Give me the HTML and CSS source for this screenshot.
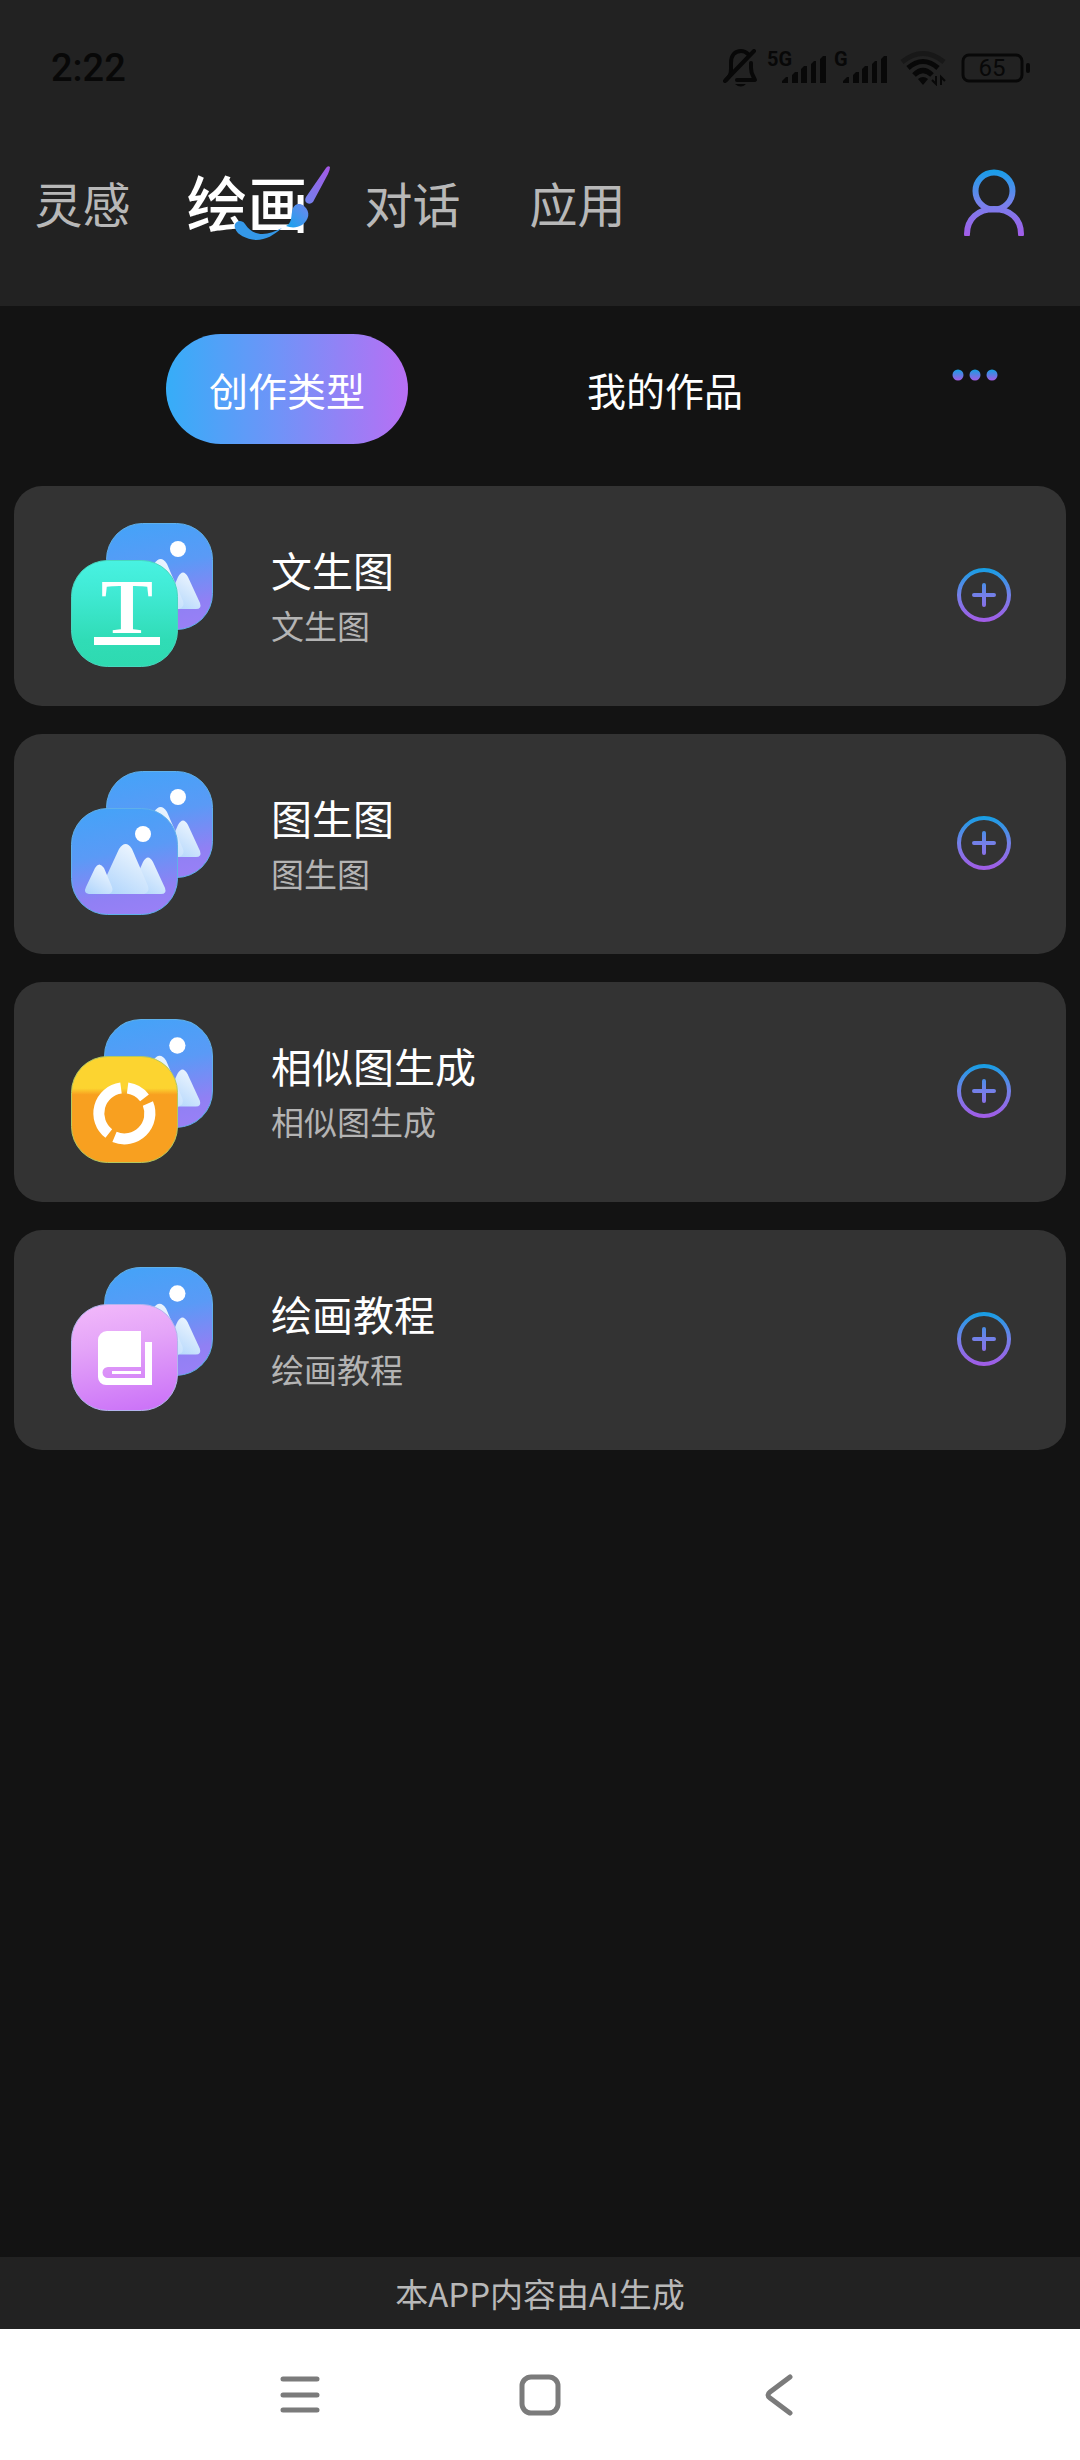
FILE: index.html
```
<!DOCTYPE html>
<html lang="zh-CN">
  <head>
    <meta charset="utf-8">
    <meta name="viewport" content="width=device-width, initial-scale=1">
    <title>绘画</title>
    <link rel="stylesheet" href="styles.css">
  </head>
  <body>
    <!-- shared gradients and symbols -->
    <svg class="defs" width="0" height="0" aria-hidden="true">
      <defs>
        <linearGradient id="line" gradientUnits="userSpaceOnUse" x1="0" y1="0" x2="0" y2="54">
          <stop offset="0" stop-color="#149fe4"/>
          <stop offset="0.5" stop-color="#7480e8"/>
          <stop offset="1" stop-color="#a35be6"/>
        </linearGradient>
        <linearGradient id="user" gradientUnits="userSpaceOnUse" x1="0" y1="0" x2="0" y2="67">
          <stop offset="0" stop-color="#149fe8"/>
          <stop offset="0.5" stop-color="#7582ec"/>
          <stop offset="1" stop-color="#a35ce8"/>
        </linearGradient>
        <linearGradient id="dots" x1="0" y1="0" x2="0" y2="1">
          <stop offset="0" stop-color="#169fe2"/>
          <stop offset="1" stop-color="#a25ce4"/>
        </linearGradient>
        <linearGradient id="handle" x1="1" y1="0" x2="0" y2="1">
          <stop offset="0" stop-color="#a656e6"/>
          <stop offset="1" stop-color="#7184ee"/>
        </linearGradient>
        <linearGradient id="drop" x1="0" y1="1" x2="1" y2="0">
          <stop offset="0" stop-color="#14a4ee"/>
          <stop offset="1" stop-color="#7186ec"/>
        </linearGradient>
        <linearGradient id="blue" x1="0.4" y1="0" x2="0.6" y2="1">
          <stop offset="0" stop-color="#46a2f8"/>
          <stop offset="0.4" stop-color="#5a9af6"/>
          <stop offset="0.8" stop-color="#9080f4"/>
          <stop offset="1" stop-color="#9880f6"/>
        </linearGradient>
        <linearGradient id="green" x1="0" y1="0" x2="0" y2="1">
          <stop offset="0" stop-color="#48f2e2"/>
          <stop offset="0.3" stop-color="#40ead4"/>
          <stop offset="0.75" stop-color="#30dcb6"/>
          <stop offset="1" stop-color="#2edab0"/>
        </linearGradient>
        <linearGradient id="orange" x1="0" y1="0" x2="0" y2="1">
          <stop offset="0.3" stop-color="#fcd430"/>
          <stop offset="0.36" stop-color="#f8a020"/>
        </linearGradient>
        <linearGradient id="pink" x1="0.4" y1="0" x2="0.6" y2="1">
          <stop offset="0" stop-color="#f0b6fa"/>
          <stop offset="0.35" stop-color="#e4a4f8"/>
          <stop offset="1" stop-color="#cc74f8"/>
        </linearGradient>
        <linearGradient id="snow" x1="0.8" y1="0" x2="0.2" y2="1">
          <stop offset="0" stop-color="#f2f8fe"/>
          <stop offset="1" stop-color="#b2d6fc"/>
        </linearGradient>

        <symbol id="photo" viewBox="0 0 107 107">
          <rect x="0.5" y="0.5" width="106" height="106" rx="36" fill="url(#blue)" stroke="#5fb0ea"/>
          <circle cx="72" cy="26" r="8" fill="#fff"/>
          <path d="M64 86 L64 72 L72 54 Q77 45 82 54 L94 80 Q96 86 90 86z" fill="url(#snow)"/>
          <path d="M32 86 L36 67 L48 41 Q54.700 31 61 41 L77 78 Q79 84 73 86z" fill="url(#snow)"/>
          <path d="M18 86 Q12 85 15 79 L24 60 Q28 53 33 60 L41 79 Q43 84 38 86z" fill="url(#snow)"/>
        </symbol>
        <symbol id="plus" viewBox="0 0 54 54">
          <g fill="none" stroke="url(#line)" stroke-width="4" stroke-linecap="round">
            <circle cx="27" cy="27" r="25"/>
            <path d="M17 27 H37 M27 17 V37"/>
          </g>
        </symbol>
        <symbol id="bars" viewBox="0 0 44 27">
          <path d="M0 27 V25 L4 21 H6 V27z M10 27 V19 L13 16 H16 V27z M19 27 V13 L22 10 H25 V27z M29 27 V8 L32 5 H34 V27z M38 27 V3 L41 0 H44 V27z"/>
        </symbol>
      </defs>
    </svg>

    <header class="header">
      <div class="status">
        <span class="time">2:22</span>
        <div class="status-icons">
          <svg width="36" height="38" viewBox="0 0 36 38" fill="none" stroke="#080808" stroke-width="4" stroke-linecap="round" stroke-linejoin="round">
            <path d="M3 31 C7 27 8 25 8 20 V14 C8 6 12 2 18 2 C21 2 23 3 25 5 M28 14 V19 C28 25 30 26 32 31 H14"/>
            <path d="M2 32 L31 2"/>
            <path d="M12 35 H23 Q18 40 12 35z" fill="#080808" stroke="none"/>
          </svg>
          <svg class="signal" width="60" height="44" viewBox="0 -4 60 44">
            <text x="1" y="16">5G</text>
            <use href="#bars" x="16" y="6" width="44" height="27"/>
          </svg>
          <svg class="signal" width="54" height="44" viewBox="0 -4 54 44">
            <text x="1" y="16">G</text>
            <use href="#bars" x="10" y="6" width="44" height="27"/>
          </svg>
          <svg class="wifi" width="46" height="36" viewBox="0 0 46 36" fill="none" stroke="#080808" stroke-width="5">
            <path d="M2 12 Q23 -5 44 12" stroke="#181818"/>
            <path d="M8 18 Q23 5 38 18"/>
            <path d="M14 25 Q23 16 32 25"/>
            <path d="M18 29 Q23 25 28 29 L23 35z" fill="#080808" stroke="none"/>
            <path d="M36 26 V34 L32 30 M41 35 V27 L45 31" stroke-width="2"/>
          </svg>
          <svg class="battery" width="70" height="30" viewBox="0 0 70 30">
            <rect x="2" y="2" width="59" height="26" rx="6" fill="none" stroke="#080808" stroke-width="3"/>
            <rect x="65" y="10" width="4" height="10" rx="2"/>
            <text x="31" y="23" text-anchor="middle">65</text>
          </svg>
        </div>
      </div>

      <div class="topbar">
        <nav class="tabs">
          <a class="tab" href="#">灵感</a>
          <a class="tab active" href="#" aria-current="page">绘画
            <svg class="brush" width="96" height="74" viewBox="0 0 96 74" aria-hidden="true">
              <path d="M1 62 C-1 56 7 52 11 58 C20 72 35 69 48 62 C40 69 32 74 22 74 C12 73 3 69 1 62z" fill="#3498e8"/>
              <path d="M52 60 C58 57 57 51 58 46 C59 38 65 36 70 40 C77 46 75 54 68 59 C63 62 57 62 52 60z" fill="url(#drop)"/>
              <path d="M72 31 L92 2 Q94 -1 96 1 Q96 4 94 8 L79 36 Q76 39 73 37 Q70 35 72 31z" fill="url(#handle)"/>
            </svg>
          </a>
          <a class="tab" href="#">对话</a>
          <a class="tab" href="#">应用</a>
        </nav>
        <button class="icon-btn" type="button" aria-label="个人中心">
          <svg width="60" height="67" viewBox="0 0 60 67" fill="none" stroke="url(#user)" stroke-width="6">
            <circle cx="30" cy="22" r="18.500"/>
            <path d="M3 65 C3 50 14 40 30 40 C46 40 57 50 57 65" stroke-linecap="round"/>
          </svg>
        </button>
      </div>
    </header>

    <main class="main">
      <div class="switch">
        <div class="switch-group">
          <button class="switch-btn on" type="button">创作类型</button>
          <button class="switch-btn" type="button">我的作品</button>
        </div>
        <button class="icon-btn more" type="button" aria-label="更多">
          <svg width="46" height="12" viewBox="0 0 46 12" fill="url(#dots)">
            <circle cx="6" cy="6" r="5.500"/>
            <circle cx="23" cy="6" r="5.500"/>
            <circle cx="40" cy="6" r="5.500"/>
          </svg>
        </button>
      </div>

      <ul class="list">
        <li class="card">
          <svg class="card-icon" width="142" height="144" viewBox="0 0 142 144">
            <use href="#photo" x="35" y="0" width="107" height="107"/>
            <rect x="0.500" y="37.500" width="106" height="106" rx="36" fill="url(#green)" stroke="#48d8c0"/>
            <text class="letter" x="56" y="110" text-anchor="middle">T</text>
            <rect x="23" y="114" width="66" height="8" fill="#fff"/>
          </svg>
          <div class="card-text">
            <h2>文生图</h2>
            <p>文生图</p>
          </div>
          <button class="icon-btn" type="button" aria-label="新建文生图"><svg width="54" height="54"><use href="#plus"/></svg></button>
        </li>
        <li class="card">
          <svg class="card-icon" width="142" height="144" viewBox="0 0 142 144">
            <use href="#photo" x="35" y="0" width="107" height="107"/>
            <use href="#photo" x="0" y="37" width="107" height="107"/>
          </svg>
          <div class="card-text">
            <h2>图生图</h2>
            <p>图生图</p>
          </div>
          <button class="icon-btn" type="button" aria-label="新建图生图"><svg width="54" height="54"><use href="#plus"/></svg></button>
        </li>
        <li class="card">
          <svg class="card-icon" width="142" height="144" viewBox="0 0 142 144">
            <use href="#photo" x="33" y="0" width="109" height="109"/>
            <rect x="0.500" y="37.500" width="106" height="106" rx="36" fill="url(#orange)" stroke="#b4c860"/>
            <path d="M56.600 69 A25.500 25.500 0 0 1 73.500 78.800 M76.900 84.500 A25.500 25.500 0 0 1 43.500 117.900 M37.800 114.500 A25.500 25.500 0 0 1 50 69" fill="none" stroke="#fff" stroke-width="11"/>
          </svg>
          <div class="card-text">
            <h2>相似图生成</h2>
            <p>相似图生成</p>
          </div>
          <button class="icon-btn" type="button" aria-label="新建相似图生成"><svg width="54" height="54"><use href="#plus"/></svg></button>
        </li>
        <li class="card">
          <svg class="card-icon" width="142" height="144" viewBox="0 0 142 144">
            <use href="#photo" x="33" y="0" width="109" height="109"/>
            <rect x="0.500" y="37.500" width="106" height="106" rx="36" fill="url(#pink)" stroke="#b4b4ee"/>
            <path d="M36 64 H70 V100 H37 A5.500 5.500 0 0 0 37 111 H74 V75 H81 V118 H35 A8 8 0 0 1 27 110 V73 A9 9 0 0 1 36 64z M41 104 H70 V107 H41z" fill="#fff"/>
          </svg>
          <div class="card-text">
            <h2>绘画教程</h2>
            <p>绘画教程</p>
          </div>
          <button class="icon-btn" type="button" aria-label="打开绘画教程"><svg width="54" height="54"><use href="#plus"/></svg></button>
        </li>
      </ul>
    </main>

    <footer class="notice">本APP内容由AI生成</footer>

    <nav class="sysnav">
      <button class="icon-btn" type="button" aria-label="菜单">
        <svg width="42" height="42" viewBox="0 0 42 42">
          <path d="M4 5 H38 M4 21 H38 M4 36 H38"/>
        </svg>
      </button>
      <button class="icon-btn" type="button" aria-label="主页">
        <svg width="42" height="42" viewBox="0 0 42 42">
          <rect x="3" y="3" width="36" height="36" rx="9"/>
        </svg>
      </button>
      <button class="icon-btn" type="button" aria-label="返回">
        <svg width="42" height="42" viewBox="0 0 42 42">
          <path d="M31 3 L11 18 Q7 21 11 24 L31 39"/>
        </svg>
      </button>
    </nav>
  </body>
</html>
```
FILE: styles.css
```
* {
  box-sizing: border-box;
  margin: 0;
  padding: 0;
}

body {
  display: flex;
  flex-direction: column;
  min-height: 100vh;
  background: #131313;
  color: #fff;
  font-family: "Noto Sans CJK SC", sans-serif;
}

svg {
  display: block;
}

button {
  border: 0;
  background: none;
  color: inherit;
  font: inherit;
  cursor: pointer;
}

.defs {
  position: absolute;
}

.header {
  background: #222;
  padding-bottom: 52px;
}

.status {
  display: flex;
  align-items: center;
  justify-content: space-between;
  padding: 44px 49px 0 51px;
  color: #080808;
}

.time {
  font: 500 38px/48px Roboto, sans-serif;
}

.status-icons {
  display: flex;
  align-items: center;
  gap: 7px;
}

.status-icons text {
  font: 700 20px Roboto, sans-serif;
}

.status-icons .battery text {
  font-size: 24px;
  font-weight: 400;
}

.wifi {
  margin-left: 6px;
}

.battery {
  margin-left: 8px;
}

.signal,
.battery {
  fill: #080808;
  overflow: visible;
}

.topbar {
  display: flex;
  align-items: center;
  justify-content: space-between;
  padding: 58px 56px 0 0;
}

.tabs {
  display: flex;
  align-items: center;
}

.tab {
  position: relative;
  width: 165px;
  line-height: 104px;
  color: #b8b8b8;
  font-size: 48px;
  text-align: center;
  text-decoration: none;
}

.tab.active {
  color: #fff;
  font-size: 61px;
  font-weight: 500;
}

/* brush stroke painted over the active tab */
.brush {
  position: absolute;
  right: 0;
  top: 16px;
}

.main {
  flex: 1;
  padding: 28px 14px;
}

.switch {
  display: flex;
  padding-left: 84px;
}

.switch-group {
  display: flex;
  flex: 1;
  justify-content: space-around;
}

.switch-btn {
  padding: 0 43px;
  border-radius: 55px;
  line-height: 110px;
  font-size: 39px;
}

.switch-btn.on {
  background: linear-gradient(90deg, #36adf8, #6e94f8 45%, #b86ff4);
}

.more {
  align-self: flex-start;
  padding: 35px 68px 35px 98px;
}

.list {
  display: grid;
  gap: 28px;
  margin-top: 42px;
  list-style: none;
}

.card {
  display: flex;
  align-items: center;
  padding: 37px 55px 39px 57px;
  border-radius: 28px;
  background: #333;
}

.card-text {
  flex: 1;
  margin-left: 58px;
}

.card-text h2 {
  font-size: 41px;
  font-weight: 400;
  line-height: 60px;
}

.card-text p {
  color: #b4b4b4;
  font-size: 33px;
  line-height: 52px;
}

.letter {
  fill: #fff;
  font: 700 78px "Liberation Serif", serif;
}

.notice {
  background: #222;
  color: #b8b8b8;
  font-size: 33px;
  line-height: 72px;
  text-align: center;
}

.sysnav {
  display: flex;
  justify-content: space-around;
  padding: 45px 180px 44px;
  background: #fff;
}

.sysnav svg {
  fill: none;
  stroke: #7b7b7b;
  stroke-width: 5px;
  stroke-linecap: round;
}
```
